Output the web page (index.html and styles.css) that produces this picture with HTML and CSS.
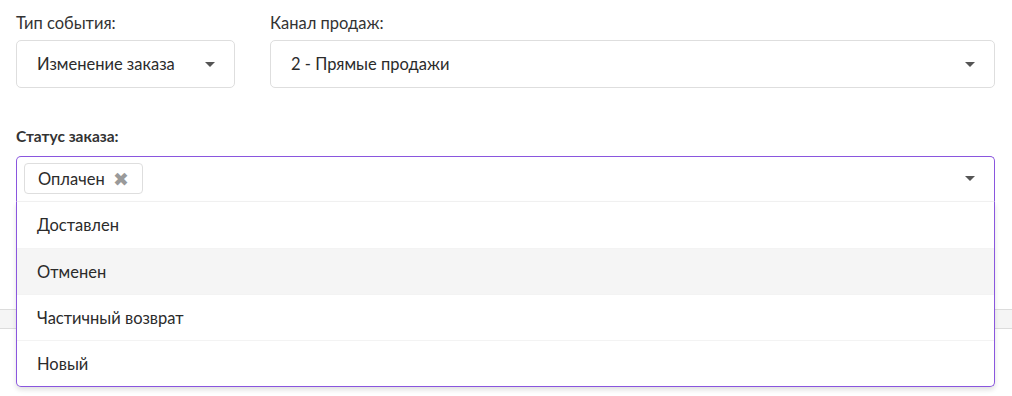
FILE: index.html
```html
<!DOCTYPE html>
<html lang="ru">
<head>
  <meta charset="UTF-8" />
  <title>Фильтр заказов</title>
  <link rel="stylesheet" href="styles.css">
</head>
<body>
  <div class="page">
    <div class="row">
      <div class="field field-type">
        <label class="field-label">Тип события:</label>
        <div class="select">
          <span class="select-value">Изменение заказа</span>
          <span class="caret"></span>
        </div>
      </div>
      <div class="field field-channel">
        <label class="field-label">Канал продаж:</label>
        <div class="select">
          <span class="select-value">2 - Прямые продажи</span>
          <span class="caret"></span>
        </div>
      </div>
    </div>

    <div class="field field-status">
      <label class="field-label bold">Статус заказа:</label>
      <div class="multi">
        <div class="multi-control">
          <span class="tag">Оплачен <span class="tag-remove">&#10006;</span></span>
          <span class="caret"></span>
        </div>
        <ul class="menu">
          <li class="menu-item">Доставлен</li>
          <li class="menu-item active">Отменен</li>
          <li class="menu-item">Частичный возврат</li>
          <li class="menu-item">Новый</li>
        </ul>
      </div>
    </div>
  </div>

  <!-- table header behind the open dropdown -->
  <div class="table-head"></div>
</body>
</html>
```

FILE: styles.css
```css
* {
  box-sizing: border-box;
  margin: 0;
  padding: 0;
}

html, body {
  min-height: 100vh;
  background: white;
  color: #2b2b2b;
  font-family: "Lato", "Noto Sans", sans-serif;
  font-size: 16.5px;
}

.page {
  padding: 13px 17px 0 16px;
}

.row {
  display: flex;
  gap: 35px;
}

.field-type {
  width: 219px;
}

.field-channel {
  flex: 1;
}

.field-label {
  display: block;
  height: 20px;
  line-height: 20px;
  margin-bottom: 7px;
  color: #333;
}

.field-label.bold {
  font-weight: bold;
  font-size: 15.5px;
  margin-bottom: 10px;
}

.select {
  height: 48px;
  border: 1px solid #dedede;
  border-radius: 5px;
  display: flex;
  align-items: center;
  justify-content: space-between;
  padding: 0 19px 0 20px;
}

.caret {
  width: 0;
  height: 0;
  border-left: 5px solid transparent;
  border-right: 5px solid transparent;
  border-top: 5px solid #555;
}

.field-status {
  margin-top: 38px;
}

.multi {
  position: relative;
}

.multi-control {
  height: 46px;
  border: 1px solid #8a56de;
  border-bottom: 1px solid #f2f2f2;
  border-radius: 5px 5px 0 0;
  display: flex;
  align-items: center;
  justify-content: space-between;
  padding: 0 19px 1px 7px;
}

.tag {
  display: inline-flex;
  align-items: center;
  height: 31px;
  padding: 0 13px 0 13px;
  border: 1px solid #dedede;
  border-radius: 4px;
  gap: 8px;
}

.tag-remove {
  color: #9a9a9a;
  font-size: 19px;
  line-height: 1;
}

.menu {
  list-style: none;
  position: absolute;
  top: 100%;
  left: 0;
  right: 0;
  z-index: 10;
  background: white;
  border: 1px solid #8a56de;
  border-top: none;
  border-radius: 0 0 5px 5px;
  box-shadow: 0 3px 5px rgba(0, 0, 0, 0.12);
}

.menu-item {
  height: 46px;
  line-height: 46px;
  padding-left: 20px;
  border-top: 1px solid #f3f3f3;
}

.menu-item:first-child {
  border-top: none;
}

.menu-item.active {
  background: #f5f5f5;
}

.table-head {
  margin-top: 107px;
  height: 20px;
  background: #f5f5f5;
  border-top: 1px solid #dcdcdc;
  border-bottom: 1px solid #dcdcdc;
}
```
